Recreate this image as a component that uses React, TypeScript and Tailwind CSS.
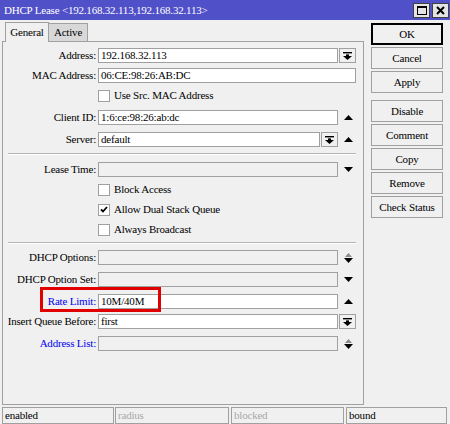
import React from 'react';

function DropBtn() {
  return (
    <div className="ml-[1px] w-[17px] h-[15px] border border-[#a0a0a0] bg-[#f0f0f0] flex items-center justify-center">
      <svg width="9" height="8" viewBox="0 0 9 8">
        <rect x="0" y="0" width="9" height="1.4" fill="#000" />
        <rect x="3" y="2.4" width="3" height="2" fill="#000" />
        <polygon points="0,4 9,4 4.5,8" fill="#000" />
      </svg>
    </div>
  );
}

function Tri({ kind }: { kind: 'up' | 'down' | 'both' }) {
  return (
    <div className="w-[20px] h-[15px] flex items-center justify-center">
      {kind === 'up' && (
        <svg width="9" height="5" viewBox="0 0 9 5">
          <polygon points="0,5 9,5 4.5,0" fill="#000" />
        </svg>
      )}
      {kind === 'down' && (
        <svg width="9" height="5" viewBox="0 0 9 5">
          <polygon points="0,0 9,0 4.5,5" fill="#000" />
        </svg>
      )}
      {kind === 'both' && (
        <svg width="9" height="11" viewBox="0 0 9 11">
          <polygon points="1,5 8,5 4.5,1" fill="#8c8c8c" />
          <polygon points="0,6 9,6 4.5,11" fill="#000" />
        </svg>
      )}
    </div>
  );
}

function Label({ text, blue }: { text: string; blue?: boolean }) {
  return (
    <div
      className={`w-[95px] pr-[2px] text-right whitespace-nowrap ${blue ? 'text-[#0000f0]' : 'text-black'}`}
    >
      {text}
    </div>
  );
}

function Field({ value, w, disabled }: { value?: string; w: string; disabled?: boolean }) {
  return (
    <div
      className={`${w} h-[15px] border border-[#a0a0a0] px-[2px] leading-[13px] whitespace-nowrap overflow-hidden ${
        disabled ? 'bg-[#f0f0f0]' : 'bg-white'
      }`}
    >
      {value}
    </div>
  );
}

function Check({ label, checked, mt }: { label: string; checked?: boolean; mt: string }) {
  return (
    <div className={`flex items-center h-[15px] ${mt}`}>
      <div className="w-[95px]" />
      <div className="w-[12px] h-[12px] border border-[#a0a0a0] bg-white flex items-center justify-center">
        {checked && (
          <svg width="8" height="7" viewBox="0 0 8 7">
            <path d="M1 3.5 L3 5.5 L7 1" stroke="#000" strokeWidth="1.8" fill="none" />
          </svg>
        )}
      </div>
      <span className="ml-[4px] whitespace-nowrap">{label}</span>
    </div>
  );
}

function Separator({ mt }: { mt: string }) {
  return <div className={`${mt} ml-[5px] w-[348px] h-[2px] border-t border-[#b4b4b4] border-b border-b-white`} />;
}

function SideButton({ label, mt, primary }: { label: string; mt?: string; primary?: boolean }) {
  return (
    <div
      className={`${mt ?? 'mt-[2px]'} w-[72px] h-[22px] flex items-center justify-center bg-[#f0f0f0] ${
        primary ? 'border-2 border-black' : 'border border-[#a0a0a0]'
      }`}
    >
      {label}
    </div>
  );
}

function StatusBox({ text, w, ml, grey }: { text: string; w: string; ml: string; grey?: boolean }) {
  return (
    <div
      className={`${w} ${ml} h-full border border-[#a0a0a0] pl-[2px] leading-[15px] ${
        grey ? 'text-[#a8a8a8]' : 'text-black'
      }`}
    >
      {text}
    </div>
  );
}

export default function App() {
  return (
    <div className="w-[450px] h-[424px] bg-[#f0f0f0] flex flex-col font-[family-name:Liberation_Serif,serif] text-[11px] tracking-[-0.2px] text-black overflow-hidden">
      {/* title bar */}
      <div className="h-[20px] bg-[#5050c8] flex items-center justify-between pl-[4px] pr-[1px]">
        <span className="text-white whitespace-nowrap">DHCP Lease &lt;192.168.32.113,192.168.32.113&gt;</span>
        <div className="flex gap-[2px]">
          <div className="w-[17px] h-[15px] bg-[#e4e4e4] border border-[#404040] flex items-center justify-center">
            <svg width="10" height="9" viewBox="0 0 10 9">
              <rect x="0.5" y="0.5" width="9" height="8" fill="none" stroke="#000" />
              <rect x="0" y="0" width="10" height="2" fill="#000" />
            </svg>
          </div>
          <div className="w-[17px] h-[15px] bg-[#e4e4e4] border border-[#404040] flex items-center justify-center">
            <svg width="9" height="9" viewBox="0 0 9 9">
              <path d="M1 1 L8 8 M8 1 L1 8" stroke="#000" strokeWidth="2" />
            </svg>
          </div>
        </div>
      </div>

      {/* body */}
      <div className="h-[387px] flex">
        <div className="ml-[2px] w-[362px] flex flex-col">
          <div className="h-[21px] flex items-end pl-[3px]">
            <div className="relative z-10 -mb-[1px] h-[20px] w-[44px] border border-b-0 border-[#a0a0a0] bg-[#f0f0f0] flex items-center justify-center">
              General
            </div>
            <div className="h-[18px] w-[39px] border-t border-r border-[#a0a0a0] bg-[#d8d8d8] flex items-center justify-center">
              Active
            </div>
          </div>

          <div className="relative h-[364px] border border-[#a0a0a0] flex flex-col">
            <div className="flex items-center h-[15px] mt-[6px]">
              <Label text="Address:" />
              <Field value="192.168.32.113" w="w-[240px]" />
              <DropBtn />
            </div>
            <div className="flex items-center h-[15px] mt-[5px]">
              <Label text="MAC Address:" />
              <Field value="06:CE:98:26:AB:DC" w="w-[258px]" />
            </div>
            <Check label="Use Src. MAC Address" mt="mt-[5px]" />
            <div className="flex items-center h-[15px] mt-[7px]">
              <Label text="Client ID:" />
              <Field value="1:6:ce:98:26:ab:dc" w="w-[240px]" />
              <Tri kind="up" />
            </div>
            <div className="flex items-center h-[15px] mt-[7px]">
              <Label text="Server:" />
              <Field value="default" w="w-[222px]" />
              <DropBtn />
              <Tri kind="up" />
            </div>

            <Separator mt="mt-[6px]" />

            <div className="flex items-center h-[15px] mt-[7px]">
              <Label text="Lease Time:" />
              <Field w="w-[240px]" disabled />
              <Tri kind="down" />
            </div>
            <Check label="Block Access" mt="mt-[5px]" />
            <Check label="Allow Dual Stack Queue" checked mt="mt-[5px]" />
            <Check label="Always Broadcast" mt="mt-[5px]" />

            <Separator mt="mt-[5px]" />

            <div className="flex items-center h-[15px] mt-[6px]">
              <Label text="DHCP Options:" />
              <Field w="w-[240px]" disabled />
              <Tri kind="both" />
            </div>
            <div className="flex items-center h-[15px] mt-[7px]">
              <Label text="DHCP Option Set:" />
              <Field w="w-[240px]" disabled />
              <Tri kind="down" />
            </div>
            <div className="flex items-center h-[15px] mt-[7px]">
              <Label text="Rate Limit:" blue />
              <Field value="10M/40M" w="w-[240px]" />
              <Tri kind="up" />
            </div>
            <div className="flex items-center h-[15px] mt-[5px]">
              <Label text="Insert Queue Before:" />
              <Field value="first" w="w-[240px]" />
              <DropBtn />
            </div>
            <div className="flex items-center h-[15px] mt-[7px]">
              <Label text="Address List:" blue />
              <Field w="w-[240px]" disabled />
              <Tri kind="both" />
            </div>

            {/* red annotation box */}
            <div className="absolute left-[37px] top-[245px] w-[121px] h-[25px] border-[3px] border-[#e00000]" />
          </div>
        </div>

        <div className="ml-[7px] pt-[3px] flex flex-col">
          <SideButton label="OK" mt="mt-0" primary />
          <SideButton label="Cancel" />
          <SideButton label="Apply" />
          <SideButton label="Disable" mt="mt-[7px]" />
          <SideButton label="Comment" />
          <SideButton label="Copy" />
          <SideButton label="Remove" />
          <SideButton label="Check Status" />
        </div>
      </div>

      {/* status bar */}
      <div className="h-[17px] flex">
        <StatusBox text="enabled" w="w-[112px]" ml="ml-[2px]" />
        <StatusBox text="radius" w="w-[114px]" ml="ml-[1px]" grey />
        <StatusBox text="blocked" w="w-[113px]" ml="ml-[2px]" grey />
        <StatusBox text="bound" w="w-[101px]" ml="ml-[2px]" />
      </div>
    </div>
  );
}
